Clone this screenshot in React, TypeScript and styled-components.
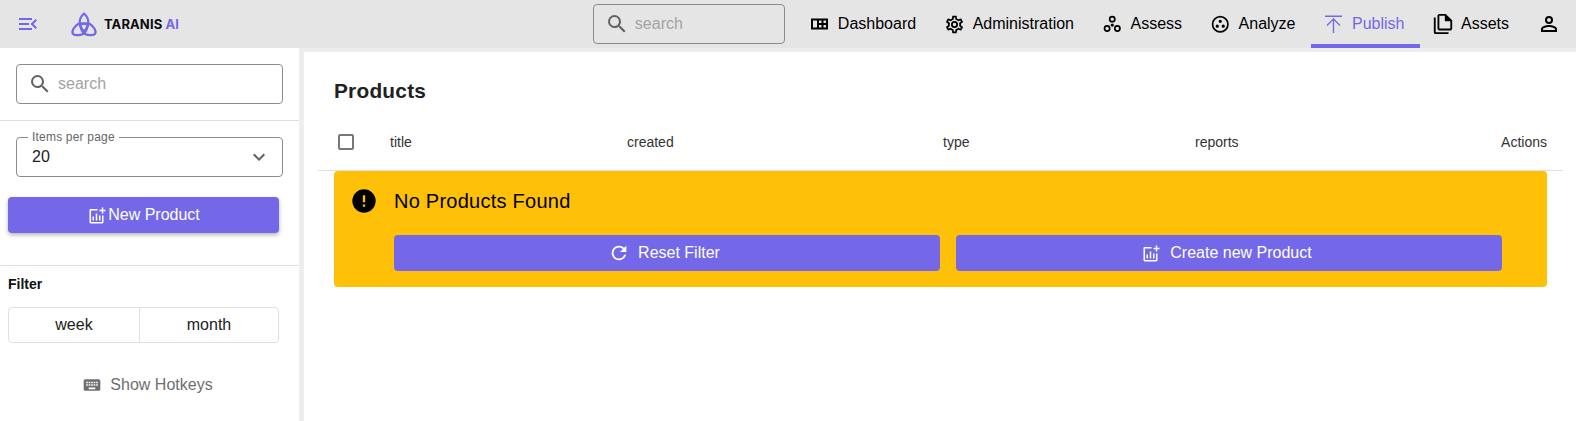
import React from 'react';
import styled, { createGlobalStyle } from 'styled-components';

const primary = '#7468e8';

const GlobalStyle = createGlobalStyle`
  html, body {
    margin: 0;
    padding: 0;
    background: #fff;
    font-family: "Liberation Sans", Arial, sans-serif;
  }
  * {
    box-sizing: border-box;
  }
`;

const Page = styled.div`
  width: 1576px;
  height: 421px;
  overflow: hidden;
  display: flex;
  flex-direction: column;
`;

const AppBar = styled.header`
  height: 48px;
  flex: none;
  background: #e5e5e5;
  display: flex;
  align-items: center;
`;

const MenuButton = styled.div`
  width: 28px;
  margin-left: 16px;
  color: ${primary};
  display: flex;
`;

const Brand = styled.div`
  display: flex;
  align-items: center;
  gap: 7px;
  margin-left: 27px;
`;

const BrandName = styled.span`
  font-family: Inter, sans-serif;
  font-weight: 700;
  font-size: 13px;
  letter-spacing: 0.1px;
  color: #0c0c0c;
`;

const BrandAi = styled.span`
  color: ${primary};
`;

const SearchBox = styled.div<{ $bar?: boolean }>`
  height: 40px;
  display: flex;
  align-items: center;
  gap: 6px;
  padding-left: 11px;
  border: 1px solid #8c8c8c;
  border-radius: 4px;
  color: #a3a3a3;
  font-size: 16px;
  width: ${p => (p.$bar ? '192px' : '267px')};
  margin-left: ${p => (p.$bar ? 'auto' : '0')};
  margin-right: ${p => (p.$bar ? '12px' : '0')};
`;

const SearchIcon = styled.span`
  display: flex;
  color: #616161;
`;

const Tabs = styled.nav`
  display: flex;
  height: 48px;
`;

const Tab = styled.div<{ $active?: boolean }>`
  display: flex;
  align-items: center;
  gap: 5px;
  padding: 0 15.5px 0 12px;
  font-size: 16px;
  color: ${p => (p.$active ? primary : '#000')};
  border-bottom: 4px solid ${p => (p.$active ? primary : 'transparent')};
  border-top: 4px solid transparent;
`;

const TabIcon = styled.span`
  width: 24px;
  height: 24px;
  display: flex;
  align-items: center;
`;

const Body = styled.div`
  flex: 1;
  display: flex;
  min-height: 0;
`;

const Sidebar = styled.aside`
  width: 304px;
  flex: none;
  border-right: 5px solid #eeeeee;
  background: #fff;
`;

const SideSection = styled.div`
  padding: 16px;
  border-bottom: 1px solid #e0e0e0;
`;

const SideControls = styled.div`
  padding: 16px 8px 32px;
  border-bottom: 1px solid #e0e0e0;
`;

const SelectBox = styled.div`
  position: relative;
  height: 40px;
  margin: 0 12px 20px 8px;
  width: 267px;
  border: 1px solid #8c8c8c;
  border-radius: 4px;
  display: flex;
  align-items: center;
  justify-content: space-between;
  padding: 0 11px 0 15px;
  font-size: 16px;
  color: #212121;
`;

const SelectLabel = styled.span`
  position: absolute;
  left: 11px;
  top: -8px;
  padding: 0 4px;
  background: #fff;
  font-size: 12px;
  line-height: 14px;
  letter-spacing: 0.2px;
  color: #666;
`;

const SelectArrow = styled.span`
  display: flex;
  color: #616161;
`;

const SideButton = styled.div`
  width: 271px;
  height: 36px;
  background: ${primary};
  color: #fff;
  border-radius: 4px;
  display: flex;
  align-items: center;
  justify-content: center;
  gap: 2px;
  padding-left: 2px;
  font-size: 16px;
  box-shadow: 0 2px 4px rgba(0, 0, 0, 0.3);
`;

const FilterSection = styled.div`
  padding: 9px 8px 0;
`;

const FilterTitle = styled.div`
  font-size: 14px;
  font-weight: 700;
  line-height: 18px;
  color: #111;
  margin-bottom: 14px;
`;

const Toggle = styled.div`
  width: 271px;
  height: 36px;
  display: grid;
  grid-template-columns: 130px 1fr;
  border: 1px solid #e0e0e0;
  border-radius: 4px;
`;

const ToggleItem = styled.div`
  display: flex;
  align-items: center;
  justify-content: center;
  font-size: 16px;
  color: #212121;
  & + & {
    border-left: 1px solid #e0e0e0;
  }
`;

const Hotkeys = styled.div`
  margin-top: 30px;
  display: flex;
  align-items: center;
  justify-content: center;
  gap: 8px;
  padding-right: 4px;
  height: 24px;
  font-size: 16px;
  color: #6e6e6e;
`;

const Main = styled.main`
  flex: 1;
  min-width: 0;
`;

const TopStrip = styled.div`
  height: 4px;
  background: #eeeeee;
`;

const Heading = styled.h1`
  margin: 0;
  padding: 25px 0 11px 30px;
  font-size: 20.8px;
  line-height: 28px;
  font-weight: 700;
  letter-spacing: 0.25px;
  color: #212121;
`;

const TableBlock = styled.div`
  margin: 0 13px 0 14px;
`;

const HeaderRow = styled.div`
  height: 55px;
  padding: 0 16px 2px 0;
  display: grid;
  grid-template-columns: 72px 237px 316px 252px 1fr auto;
  align-items: center;
  border-bottom: 1px solid #e0e0e0;
  font-size: 14px;
  color: #333;
`;

const CheckCell = styled.div`
  padding-left: 20px;
  display: flex;
`;

const CheckBox = styled.span`
  width: 16px;
  height: 16px;
  border: 2px solid #777;
  border-radius: 2px;
`;

const Alert = styled.div`
  margin: 0 16px;
  height: 116px;
  background: #ffc107;
  border-radius: 4px;
  display: grid;
  grid-template-columns: 60px 1fr;
  padding: 16px 45px 16px 0;
`;

const AlertIcon = styled.div`
  display: flex;
  justify-content: center;
  align-items: flex-start;
`;

const AlertTitle = styled.div`
  font-size: 20px;
  line-height: 28px;
  letter-spacing: 0.25px;
  color: #000;
  margin-bottom: 20px;
`;

const AlertActions = styled.div`
  display: grid;
  grid-template-columns: 1fr 1fr;
  gap: 16px;
`;

const AlertButton = styled.div`
  height: 36px;
  background: ${primary};
  color: #fff;
  border-radius: 4px;
  display: flex;
  align-items: center;
  justify-content: center;
  gap: 8px;
  padding-right: 6px;
  font-size: 16px;
`;

const ButtonIcon = styled.span`
  width: 22px;
  height: 22px;
  display: flex;
  align-items: center;
  justify-content: center;
`;

const Svg: React.FC<{ size?: number; d: string }> = ({ size = 24, d }) => (
  <svg width={size} height={size} viewBox="0 0 24 24" fill="currentColor">
    <path d={d} />
  </svg>
);

const mdi = {
  menuOpen: 'M21,15.61L19.59,17L14.58,12L19.59,7L21,8.39L17.44,12L21,15.61M3,6H16V8H3V6M3,13V11H13V13H3M3,18V16H16V18H3Z',
  magnify: 'M9.5,3A6.5,6.5 0 0,1 16,9.5C16,11.11 15.41,12.59 14.44,13.73L14.71,14H15.5L20.5,19L19,20.5L14,15.5V14.71L13.73,14.44C12.59,15.41 11.11,16 9.5,16A6.5,6.5 0 0,1 3,9.5A6.5,6.5 0 0,1 9.5,3M9.5,5C7,5 5,7 5,9.5C5,12 7,14 9.5,14C12,14 14,12 14,9.5C14,7 12,5 9.5,5Z',
  chevron: 'M7.41,8.58L12,13.17L16.59,8.58L18,10L12,16L6,10L7.41,8.58Z',
  refresh: 'M17.65,6.35C16.2,4.9 14.21,4 12,4A8,8 0 0,0 4,12A8,8 0 0,0 12,20C15.73,20 18.84,17.45 19.73,14H17.65C16.83,16.33 14.61,18 12,18A6,6 0 0,1 6,12A6,6 0 0,1 12,6C13.66,6 15.14,6.69 16.22,7.78L13,11H20V4L17.65,6.35Z',
  alert: 'M13,13H11V7H13M13,17H11V15H13M12,2A10,10 0 0,0 2,12A10,10 0 0,0 12,22A10,10 0 0,0 22,12A10,10 0 0,0 12,2Z',
  account: 'M12,4A4,4 0 0,1 16,8A4,4 0 0,1 12,12A4,4 0 0,1 8,8A4,4 0 0,1 12,4M12,6A2,2 0 0,0 10,8A2,2 0 0,0 12,10A2,2 0 0,0 14,8A2,2 0 0,0 12,6M12,13C14.67,13 20,14.33 20,17V20H4V17C4,14.33 9.33,13 12,13M12,14.9C9.03,14.9 5.9,16.36 5.9,17V18.1H18.1V17C18.1,16.36 14.97,14.9 12,14.9Z',
  publish: 'M2,3.5H19V5H2V3.5M11.2,21H9.8V8.6L4.5,13.9L3.5,12.9L10.5,5.9L17.5,12.9L16.5,13.9L11.2,8.6V21Z',
  files: 'M4,5V21H18V23H4C2.9,23 2,22.1 2,21V5H4M15,1H8C6.9,1 6,1.9 6,3V17C6,18.1 6.9,19 8,19H20C21.1,19 22,18.1 22,17V8L15,1M20,17H8V3H14V9H20V17Z',
  keyboard: 'M19,10H17V8H19M19,13H17V11H19M16,10H14V8H16M16,13H14V11H16M16,17H8V15H16M7,10H5V8H7M7,13H5V11H7M8,11H10V13H8M8,8H10V10H8M11,11H13V13H11M11,8H13V10H11M20,5H4C2.89,5 2,5.89 2,7V17A2,2 0 0,0 4,19H20A2,2 0 0,0 22,17V7C22,5.89 21.1,5 20,5Z',
  cog: 'M12,8A4,4 0 0,1 16,12A4,4 0 0,1 12,16A4,4 0 0,1 8,12A4,4 0 0,1 12,8M12,10A2,2 0 0,0 10,12A2,2 0 0,0 12,14A2,2 0 0,0 14,12A2,2 0 0,0 12,10M10,22C9.75,22 9.54,21.82 9.5,21.58L9.13,18.93C8.5,18.68 7.96,18.34 7.44,17.94L4.95,18.95C4.73,19.03 4.46,18.95 4.34,18.73L2.34,15.27C2.21,15.05 2.27,14.78 2.46,14.63L4.57,12.97L4.5,12L4.57,11L2.46,9.37C2.27,9.22 2.21,8.95 2.34,8.73L4.34,5.27C4.46,5.05 4.73,4.96 4.95,5.05L7.44,6.05C7.96,5.66 8.5,5.32 9.13,5.07L9.5,2.42C9.54,2.18 9.75,2 10,2H14C14.25,2 14.46,2.18 14.5,2.42L14.87,5.07C15.5,5.32 16.04,5.66 16.56,6.05L19.05,5.05C19.27,4.96 19.54,5.05 19.66,5.27L21.66,8.73C21.79,8.95 21.73,9.22 21.54,9.37L19.43,11L19.5,12L19.43,13L21.54,14.63C21.73,14.78 21.79,15.05 21.66,15.27L19.66,18.73C19.54,18.95 19.27,19.04 19.05,18.95L16.56,17.95C16.04,18.34 15.5,18.68 14.87,18.93L14.5,21.58C14.46,21.82 14.25,22 14,22H10M11.25,4L10.88,6.61C9.68,6.86 8.62,7.5 7.85,8.39L5.44,7.35L4.69,8.65L6.8,10.2C6.4,11.37 6.4,12.64 6.8,13.8L4.68,15.36L5.43,16.66L7.86,15.62C8.63,16.5 9.68,17.14 10.87,17.38L11.24,20H12.76L13.13,17.39C14.32,17.14 15.37,16.5 16.14,15.62L18.57,16.66L19.32,15.36L17.2,13.81C17.6,12.64 17.6,11.37 17.2,10.2L19.31,8.65L18.56,7.35L16.15,8.39C15.38,7.5 14.32,6.86 13.12,6.62L12.75,4H11.25Z',
  circles: 'M18,19C16.89,19 16,18.1 16,17C16,15.89 16.89,15 18,15A2,2 0 0,1 20,17A2,2 0 0,1 18,19M18,13A4,4 0 0,0 14,17A4,4 0 0,0 18,21A4,4 0 0,0 22,17A4,4 0 0,0 18,13M12,11.1A1.9,1.9 0 0,0 10.1,13A1.9,1.9 0 0,0 12,14.9A1.9,1.9 0 0,0 13.9,13A1.9,1.9 0 0,0 12,11.1M6,19C4.89,19 4,18.1 4,17C4,15.89 4.89,15 6,15A2,2 0 0,1 8,17A2,2 0 0,1 6,19M6,13A4,4 0 0,0 2,17A4,4 0 0,0 6,21A4,4 0 0,0 10,17A4,4 0 0,0 6,13M12,4A2,2 0 0,1 14,6C14,7.11 13.1,8 12,8C10.89,8 10,7.1 10,6A2,2 0 0,1 12,4M12,10A4,4 0 0,0 16,6A4,4 0 0,0 12,2A4,4 0 0,0 8,6A4,4 0 0,0 12,10Z',
  dashboard: 'M2,6.5H19V17.5H2V6.5M4,8.5V15.5H8V8.5H4M10,8.5V11H12.5V8.5H10M14.5,8.5V11H17V8.5H14.5M10,13V15.5H12.5V13H10M14.5,13V15.5H17V13H14.5Z',
  analyze: 'M12,2A10,10 0 1,0 22,12A10,10 0 0,0 12,2M12,4A8,8 0 1,1 4,12A8,8 0 0,1 12,4M12,6.6A1.9,1.9 0 1,0 13.9,8.5A1.9,1.9 0 0,0 12,6.6M8.5,12.4A1.9,1.9 0 1,0 10.4,14.3A1.9,1.9 0 0,0 8.5,12.4M15.5,12.4A1.9,1.9 0 1,0 17.4,14.3A1.9,1.9 0 0,0 15.5,12.4Z',
};

const ChartPlusIcon: React.FC = () => (
  <svg width="17" height="17" viewBox="3.5 3.5 17 17" fill="currentColor">
    <path d="M4.8,5.5H12V7H5.5V18.5H16.5V12H18V18.8C18,19.5 17.5,20 16.8,20H5.2C4.5,20 4,19.5 4,18.8V6.3C4,5.9 4.4,5.5 4.8,5.5Z" />
    <path d="M16.25,4H17.75V6.25H20V7.75H17.75V10H16.25V7.75H14V6.25H16.25V4Z" />
    <path d="M7,13H8.5V17H7V13M10.25,10H11.75V17H10.25V10M13.5,12H15V17H13.5V12Z" />
  </svg>
);

const pointedPetal = 'M13 1.5C8 6 6.5 13 13 19.5C19.5 13 18 6 13 1.5Z';
const roundPetal = 'M13 2C10.5 2 7.5 7 7.5 11C7.5 14 10 17 13 19.5C16 17 18.5 14 18.5 11C18.5 7 15.5 2 13 2Z';

const Logo: React.FC = () => (
  <svg
    width="26"
    height="25"
    viewBox="0 0 26 25"
    fill="none"
    stroke={primary}
    strokeWidth="2.2"
    strokeLinejoin="round"
    overflow="visible"
  >
    <path d={pointedPetal} />
    <path d={roundPetal} transform="rotate(120 13 15)" />
    <path d={roundPetal} transform="rotate(240 13 15)" />
  </svg>
);

const navItems = [
  { label: 'Dashboard', icon: mdi.dashboard, size: 24 },
  { label: 'Administration', icon: mdi.cog, size: 21 },
  { label: 'Assess', icon: mdi.circles, size: 20.5 },
  { label: 'Analyze', icon: mdi.analyze, size: 20.5 },
  { label: 'Publish', icon: mdi.publish, size: 24, active: true },
  { label: 'Assets', icon: mdi.files, size: 22 },
  { label: '', icon: mdi.account, size: 24 },
];

const columns = ['title', 'created', 'type', 'reports'];

const App: React.FC = () => (
  <Page>
    <GlobalStyle />
    <AppBar>
      <MenuButton>
        <Svg d={mdi.menuOpen} />
      </MenuButton>
      <Brand>
        <Logo />
        <BrandName>
          TARANIS <BrandAi>AI</BrandAi>
        </BrandName>
      </Brand>
      <SearchBox $bar>
        <SearchIcon>
          <Svg d={mdi.magnify} />
        </SearchIcon>
        search
      </SearchBox>
      <Tabs>
        {navItems.map(item => (
          <Tab key={item.icon} $active={item.active}>
            <TabIcon>
              <Svg size={item.size} d={item.icon} />
            </TabIcon>
            {item.label}
          </Tab>
        ))}
      </Tabs>
    </AppBar>
    <Body>
      <Sidebar>
        <SideSection>
          <SearchBox>
            <SearchIcon>
              <Svg d={mdi.magnify} />
            </SearchIcon>
            search
          </SearchBox>
        </SideSection>
        <SideControls>
          <SelectBox>
            <SelectLabel>Items per page</SelectLabel>
            20
            <SelectArrow>
              <Svg d={mdi.chevron} />
            </SelectArrow>
          </SelectBox>
          <SideButton>
            <ChartPlusIcon />
            New Product
          </SideButton>
        </SideControls>
        <FilterSection>
          <FilterTitle>Filter</FilterTitle>
          <Toggle>
            <ToggleItem>week</ToggleItem>
            <ToggleItem>month</ToggleItem>
          </Toggle>
          <Hotkeys>
            <Svg size={20} d={mdi.keyboard} />
            Show Hotkeys
          </Hotkeys>
        </FilterSection>
      </Sidebar>
      <Main>
        <TopStrip />
        <Heading>Products</Heading>
        <TableBlock>
          <HeaderRow>
            <CheckCell>
              <CheckBox />
            </CheckCell>
            {columns.map(col => (
              <div key={col}>{col}</div>
            ))}
            <div>Actions</div>
          </HeaderRow>
          <Alert>
            <AlertIcon>
              <Svg size={28} d={mdi.alert} />
            </AlertIcon>
            <div>
              <AlertTitle>No Products Found</AlertTitle>
              <AlertActions>
                <AlertButton>
                  <ButtonIcon>
                    <Svg size={22} d={mdi.refresh} />
                  </ButtonIcon>
                  Reset Filter
                </AlertButton>
                <AlertButton>
                  <ButtonIcon>
                    <ChartPlusIcon />
                  </ButtonIcon>
                  Create new Product
                </AlertButton>
              </AlertActions>
            </div>
          </Alert>
        </TableBlock>
      </Main>
    </Body>
  </Page>
);

export default App;
